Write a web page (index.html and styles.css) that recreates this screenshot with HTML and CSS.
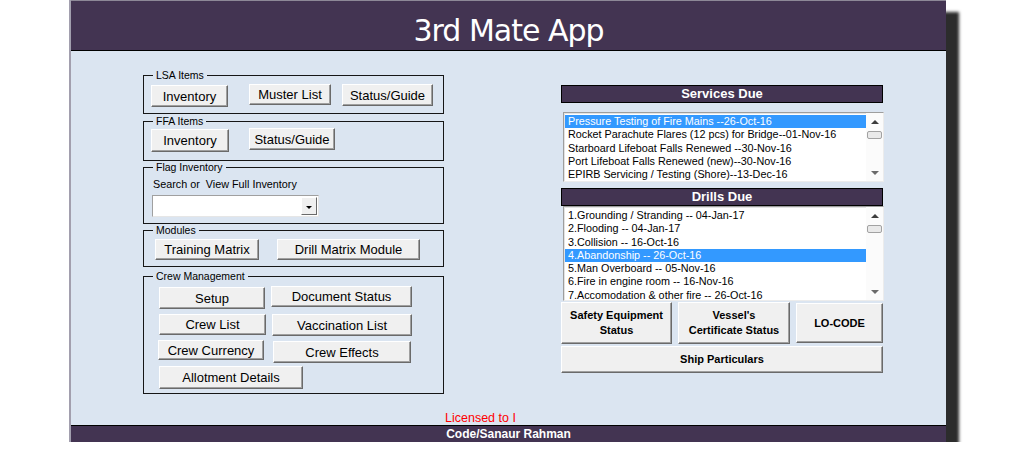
FILE: index.html
```html
<!DOCTYPE html>
<html>
<head>
<meta charset="utf-8">
<title>3rd Mate App</title>
<link rel="stylesheet" href="styles.css">
</head>
<body>
<div class="window">
  <header class="titlebar"><h1 class="title">3rd Mate App</h1></header>
  <main class="content">
    <div class="leftcol">
      <fieldset class="group g-lsa">
        <legend>LSA Items</legend>
        <div class="row pl7">
          <button class="btn w77 h22 mt4">Inventory</button>
          <button class="btn w82 h21 mt3 ml21">Muster List</button>
          <button class="btn w91 h22 mt3 ml11">Status/Guide</button>
        </div>
      </fieldset>
      <fieldset class="group g-ffa">
        <legend>FFA Items</legend>
        <div class="row pl7">
          <button class="btn w78 h23 mt2">Inventory</button>
          <button class="btn w86 h22 mt1 ml20">Status/Guide</button>
        </div>
      </fieldset>
      <fieldset class="group g-flag">
        <legend>Flag Inventory</legend>
        <div class="search-label">Search or&nbsp; View Full Inventory</div>
        <div class="combo">
          <div class="combo-btn"><span class="caret"></span></div>
        </div>
      </fieldset>
      <fieldset class="group g-mod">
        <legend>Modules</legend>
        <div class="row pl11">
          <button class="btn w104 h21 mt3">Training Matrix</button>
          <button class="btn w143 h21 mt3 ml18">Drill Matrix Module</button>
        </div>
      </fieldset>
      <fieldset class="group g-crew">
        <legend>Crew Management</legend>
        <div class="row pl15">
          <button class="btn w106 h22 mt5">Setup</button>
          <button class="btn w141 h21 mt4 ml6">Document Status</button>
        </div>
        <div class="row pl15 rgap5">
          <button class="btn w107 h21">Crew List</button>
          <button class="btn w140 h22 ml6">Vaccination List</button>
        </div>
        <div class="row pl15 rgap4">
          <button class="btn w106 h20 mln1">Crew Currency</button>
          <button class="btn w138 h22 mt1 ml9">Crew Effects</button>
        </div>
        <div class="row pl15 rgap3">
          <button class="btn w144 h23">Allotment Details</button>
        </div>
      </fieldset>
    </div>

    <div class="rightcol">
      <div class="bar">Services Due</div>
      <div class="listbox lb-services">
        <ul class="items">
          <li class="item selected">Pressure Testing of Fire Mains --26-Oct-16</li>
          <li class="item">Rocket Parachute Flares (12 pcs) for Bridge--01-Nov-16</li>
          <li class="item">Starboard Lifeboat Falls Renewed --30-Nov-16</li>
          <li class="item">Port Lifeboat Falls Renewed (new)--30-Nov-16</li>
          <li class="item">EPIRB Servicing / Testing (Shore)--13-Dec-16</li>
        </ul>
        <div class="scrollbar">
          <div class="arrow-box"><span class="arrow-up"></span></div>
          <div class="thumb"></div>
          <div class="track"></div>
          <div class="arrow-box"><span class="arrow-down"></span></div>
        </div>
      </div>

      <div class="bar bar-drills">Drills Due</div>
      <div class="listbox lb-drills">
        <ul class="items">
          <li class="item">1.Grounding / Stranding -- 04-Jan-17</li>
          <li class="item">2.Flooding -- 04-Jan-17</li>
          <li class="item">3.Collision -- 16-Oct-16</li>
          <li class="item selected">4.Abandonship -- 26-Oct-16</li>
          <li class="item">5.Man Overboard -- 05-Nov-16</li>
          <li class="item">6.Fire in engine room -- 16-Nov-16</li>
          <li class="item">7.Accomodation &amp; other fire -- 26-Oct-16</li>
        </ul>
        <div class="scrollbar">
          <div class="arrow-box"><span class="arrow-up"></span></div>
          <div class="thumb"></div>
          <div class="track"></div>
          <div class="arrow-box"><span class="arrow-down"></span></div>
        </div>
      </div>

      <div class="action-row">
        <button class="btn bbtn w111 h42">Safety Equipment<br>Status</button>
        <button class="btn bbtn w112 h42 ml6">Vessel's<br>Certificate Status</button>
        <button class="btn bbtn w87 h40 mt1 ml6">LO-CODE</button>
      </div>
      <button class="btn bbtn ship">Ship Particulars</button>
    </div>
  </main>
  <div class="license">Licensed to I</div>
  <footer class="footer">Code/Sanaur Rahman</footer>
</div>
</body>
</html>
```

FILE: styles.css
```css
html, body {
  margin: 0;
  padding: 0;
  background: #ffffff;
}

.window {
  box-sizing: border-box;
  margin-left: 69px;
  width: 877px;
  height: 442px;
  border-left: 2px solid #a29fae;
  background: #dbe5f1;
  box-shadow: 13px 12px 3px #2c2c2c;
  display: flex;
  flex-direction: column;
}

.titlebar {
  box-sizing: border-box;
  height: 51px;
  background: #433452;
  border-top: 1px solid #8d8897;
  border-bottom: 1px solid #000;
}

.title {
  margin: 0;
  padding-top: 12px;
  font: normal 30px/36px "DejaVu Sans", sans-serif;
  letter-spacing: -1px;
  color: #ffffff;
  text-align: center;
}

.content {
  flex: 1;
  display: flex;
  align-items: flex-start;
  padding-left: 72px;
}

/* ---------- left column ---------- */
.leftcol {
  width: 301px;
  padding-top: 18px;
  display: flex;
  flex-direction: column;
}

.group {
  box-sizing: border-box;
  margin: 0;
  padding: 0;
  min-width: 0;
  width: 301px;
  border: 1px solid #161616;
}

.group legend {
  margin-left: 9px;
  padding: 0 3px;
  font: 10.5px/12px "Liberation Sans", Arial, sans-serif;
  color: #000;
}

.g-lsa { height: 45px; }
.g-ffa { height: 46px; margin-top: 1px; }
.g-flag { height: 63px; }
.g-mod { height: 43px; }
.g-crew { height: 124px; margin-top: 3px; }

.row {
  display: flex;
  align-items: flex-start;
}

.pl7 { padding-left: 7px; }
.pl11 { padding-left: 11px; }
.pl15 { padding-left: 15px; }
.rgap5 { margin-top: 5px; }
.rgap4 { margin-top: 4px; }
.rgap3 { margin-top: 3px; }

.btn {
  box-sizing: border-box;
  margin: 0;
  padding: 0;
  background: #f0f0f0;
  border: 1px solid;
  border-color: #ffffff #6a6a6a #6a6a6a #ffffff;
  box-shadow: inset -1px -1px 0 #a0a0a0;
  font: 13px/15px "Liberation Sans", Arial, sans-serif;
  color: #000;
  text-align: center;
  white-space: nowrap;
}

.w77 { width: 77px; }
.w78 { width: 78px; }
.w82 { width: 82px; }
.w86 { width: 86px; }
.w87 { width: 87px; }
.w91 { width: 91px; }
.w104 { width: 104px; }
.w106 { width: 106px; }
.w107 { width: 107px; }
.w111 { width: 111px; }
.w112 { width: 112px; }
.w138 { width: 138px; }
.w140 { width: 140px; }
.w141 { width: 141px; }
.w143 { width: 143px; }
.w144 { width: 144px; }

.h20 { height: 20px; }
.h21 { height: 21px; }
.h22 { height: 22px; }
.h23 { height: 23px; }
.h40 { height: 40px; }
.h42 { height: 42px; }

.mt1 { margin-top: 1px; }
.mt2 { margin-top: 2px; }
.mt3 { margin-top: 3px; }
.mt4 { margin-top: 4px; }
.mt5 { margin-top: 5px; }
.ml6 { margin-left: 6px; }
.ml9 { margin-left: 9px; }
.ml11 { margin-left: 11px; }
.ml18 { margin-left: 18px; }
.ml20 { margin-left: 20px; }
.ml21 { margin-left: 21px; }
.mln1 { margin-left: -1px; }

.search-label {
  margin: 5px 0 0 9px;
  font: 10.8px/13px "Liberation Sans", Arial, sans-serif;
  color: #000;
}

.combo {
  box-sizing: border-box;
  margin: 4px 0 0 8px;
  width: 167px;
  height: 22px;
  background: #ffffff;
  border: 1px solid;
  border-color: #a0a0a0 #e6e6e6 #e6e6e6 #a0a0a0;
  display: flex;
  justify-content: flex-end;
  align-items: center;
  padding-right: 1px;
}

.combo-btn {
  box-sizing: border-box;
  width: 16px;
  height: 18px;
  background: #f0f0f0;
  border: 1px solid;
  border-color: #ffffff #6a6a6a #6a6a6a #ffffff;
  display: flex;
  align-items: center;
  justify-content: center;
}

.caret {
  width: 0;
  height: 0;
  border-left: 3px solid transparent;
  border-right: 3px solid transparent;
  border-top: 3px solid #000;
  margin-top: 2px;
}

/* ---------- right column ---------- */
.rightcol {
  width: 322px;
  margin-left: 117px;
  padding-top: 34px;
  display: flex;
  flex-direction: column;
}

.bar {
  box-sizing: border-box;
  height: 18px;
  background: #433452;
  border: 1px solid #000;
  color: #ffffff;
  font: bold 13px/16px "Liberation Sans", Arial, sans-serif;
  text-align: center;
}

.bar-drills { margin-top: 6px; }

.listbox {
  box-sizing: border-box;
  width: 321px;
  margin-left: 2px;
  background: #ffffff;
  border: 1px solid;
  border-color: #9e9e9e #ececec #ececec #9e9e9e;
  box-shadow: inset 1px 1px 0 #e3e3e3;
  display: flex;
}

.lb-services {
  margin-top: 9px;
  height: 70px;
}

.lb-drills {
  height: 95px;
}

.items {
  flex: 1;
  margin: 0;
  padding: 2px 0 0 1px;
  list-style: none;
  overflow: hidden;
}

.item {
  height: 13.3px;
  padding-left: 3px;
  font: 10.8px/13.3px "Liberation Sans", Arial, sans-serif;
  color: #000;
  white-space: nowrap;
}

.item.selected {
  background: #3399ff;
  color: #ffffff;
}

.scrollbar {
  width: 17px;
  display: flex;
  flex-direction: column;
  align-items: center;
  background: #fbfbfb;
}

.arrow-box {
  height: 17px;
  width: 17px;
  display: flex;
  align-items: center;
  justify-content: center;
}

.arrow-up {
  width: 0;
  height: 0;
  border-left: 4px solid transparent;
  border-right: 4px solid transparent;
  border-bottom: 4px solid #3c3c3c;
}

.arrow-down {
  width: 0;
  height: 0;
  border-left: 4px solid transparent;
  border-right: 4px solid transparent;
  border-top: 4px solid #6a6a6a;
}

.thumb {
  box-sizing: border-box;
  margin-top: 1px;
  width: 15px;
  height: 8px;
  background: #e9e9e9;
  border: 1px solid #a2a2a2;
  border-radius: 2px;
}

.track { flex: 1; }

.action-row {
  display: flex;
  align-items: flex-start;
  margin-top: 1px;
}

.bbtn {
  font: bold 11px/15px "Liberation Sans", Arial, sans-serif;
}

.ship {
  margin-top: 2px;
  width: 322px;
  height: 27px;
}

/* ---------- footer ---------- */
.license {
  height: 14px;
  padding-left: 374px;
  font: 12.5px/14px "Liberation Sans", Arial, sans-serif;
  color: #ff0000;
}

.footer {
  box-sizing: border-box;
  height: 17px;
  background: #433452;
  border-top: 1px solid #000;
  color: #ffffff;
  font: bold 12px/16px "Liberation Sans", Arial, sans-serif;
  text-align: center;
}
```
